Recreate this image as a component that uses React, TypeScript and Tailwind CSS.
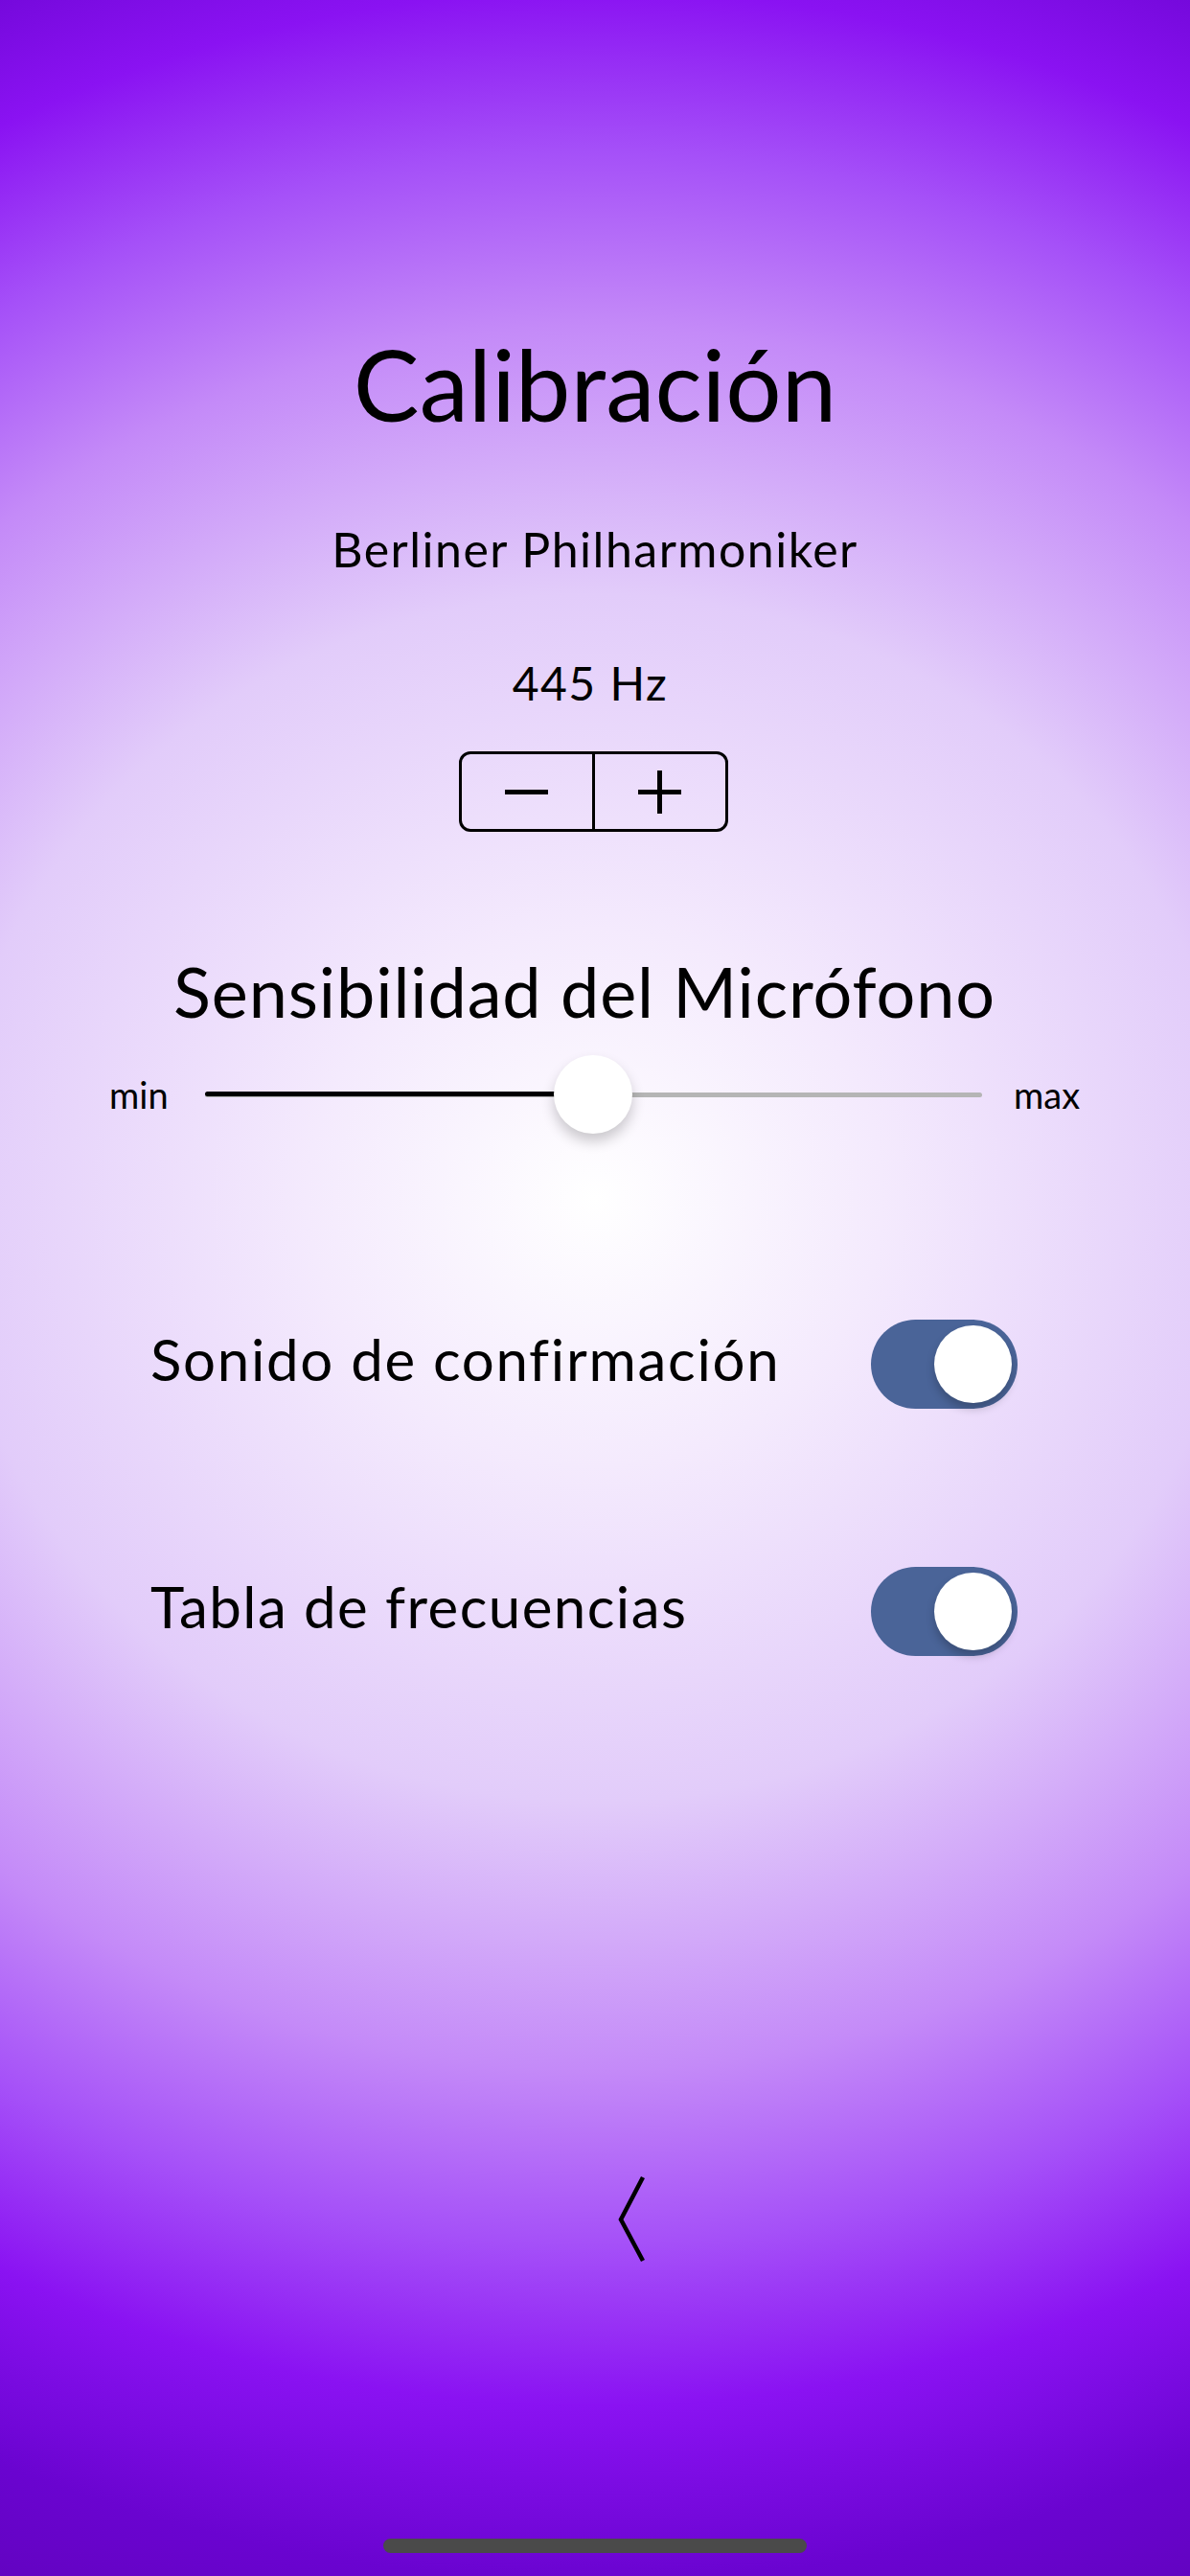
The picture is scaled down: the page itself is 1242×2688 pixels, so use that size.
import React from "react";

function Toggle() {
  return (
    <div className="relative w-[153px] h-[93px] rounded-full bg-[#4a6498] shrink-0">
      <div className="absolute right-[6px] top-[6px] w-[81px] h-[81px] rounded-full bg-white shadow-[0_6px_10px_rgba(0,0,0,0.22)]" />
    </div>
  );
}

export default function App() {
  return (
    <div
      className="relative w-[1242px] h-[2688px] overflow-hidden text-black bg-[radial-gradient(ellipse_1500px_1400px_at_50%_1250px,#ffffff_0%,#f4eafd_20%,#e2ccfa_45%,#c48af8_65%,#a550f8_78%,#8a12f2_90%,#6a04d0_103%,#5a04b0_120%)]"
      style={{ fontFamily: "Lato, 'Open Sans', sans-serif" }}
    >
      <div className="flex flex-col items-center w-full">
        <div className="mt-[349px] text-[103px] leading-none">Calibración</div>
        <div className="mt-[96px] text-[50px] leading-none tracking-[1.5px]">Berliner Philharmoniker</div>
        <div className="mt-[91px] mr-[10px] text-[48px] leading-none tracking-[1.5px]">445 Hz</div>

        <div className="mt-[47px] mr-[4px] flex w-[281px] h-[84px] border-[3px] border-black rounded-[12px] overflow-hidden">
          <div className="flex-1 flex items-center justify-center">
            <div className="w-[45px] h-[5px] bg-black" />
          </div>
          <div className="w-[3px] bg-black" />
          <div className="flex-1 flex items-center justify-center">
            <div className="relative w-[45px] h-[45px]">
              <div className="absolute left-0 top-[20px] w-[45px] h-[5px] bg-black" />
              <div className="absolute top-0 left-[20px] w-[5px] h-[45px] bg-black" />
            </div>
          </div>
        </div>

        <div className="mt-[130px] mr-[22px] text-[72px] leading-none tracking-[0.9px]">Sensibilidad del Micrófono</div>

        <div className="mt-[31px] w-full flex items-center pl-[114px] h-[82px]">
          <span className="text-[38px] leading-none w-[62px]">min</span>
          <div className="relative ml-[38px] w-[811px] h-[82px] flex items-center">
            <div className="w-full h-[5px] rounded-full bg-[#b5b5b5]" />
            <div className="absolute left-0 top-[38px] w-[380px] h-[5px] rounded-full bg-black" />
            <div className="absolute left-[364px] top-0 w-[82px] h-[82px] rounded-full bg-white shadow-[0_8px_14px_rgba(0,0,0,0.2)]" />
          </div>
          <span className="ml-[33px] text-[38px] leading-none">max</span>
        </div>

        <div className="mt-[194px] w-full flex items-start justify-between pl-[157px] pr-[180px]">
          <span className="mt-[11px] text-[60px] leading-none tracking-[1.7px]">Sonido de confirmación</span>
          <Toggle />
        </div>

        <div className="mt-[165px] w-full flex items-start justify-between pl-[157px] pr-[180px]">
          <span className="mt-[11px] text-[60px] leading-none tracking-[1.45px]">Tabla de frecuencias</span>
          <Toggle />
        </div>

        <div className="self-start ml-[640px] mt-[540px]">
          <svg width="40" height="96" viewBox="0 0 40 96" fill="none">
            <polyline points="31,4 8,48 31,91" stroke="#000" strokeWidth="4.5" strokeLinejoin="miter" />
          </svg>
        </div>
      </div>

      <div className="absolute left-[400px] bottom-[24px] w-[442px] h-[15px] rounded-full bg-[#4a4a4a]" />
    </div>
  );
}
